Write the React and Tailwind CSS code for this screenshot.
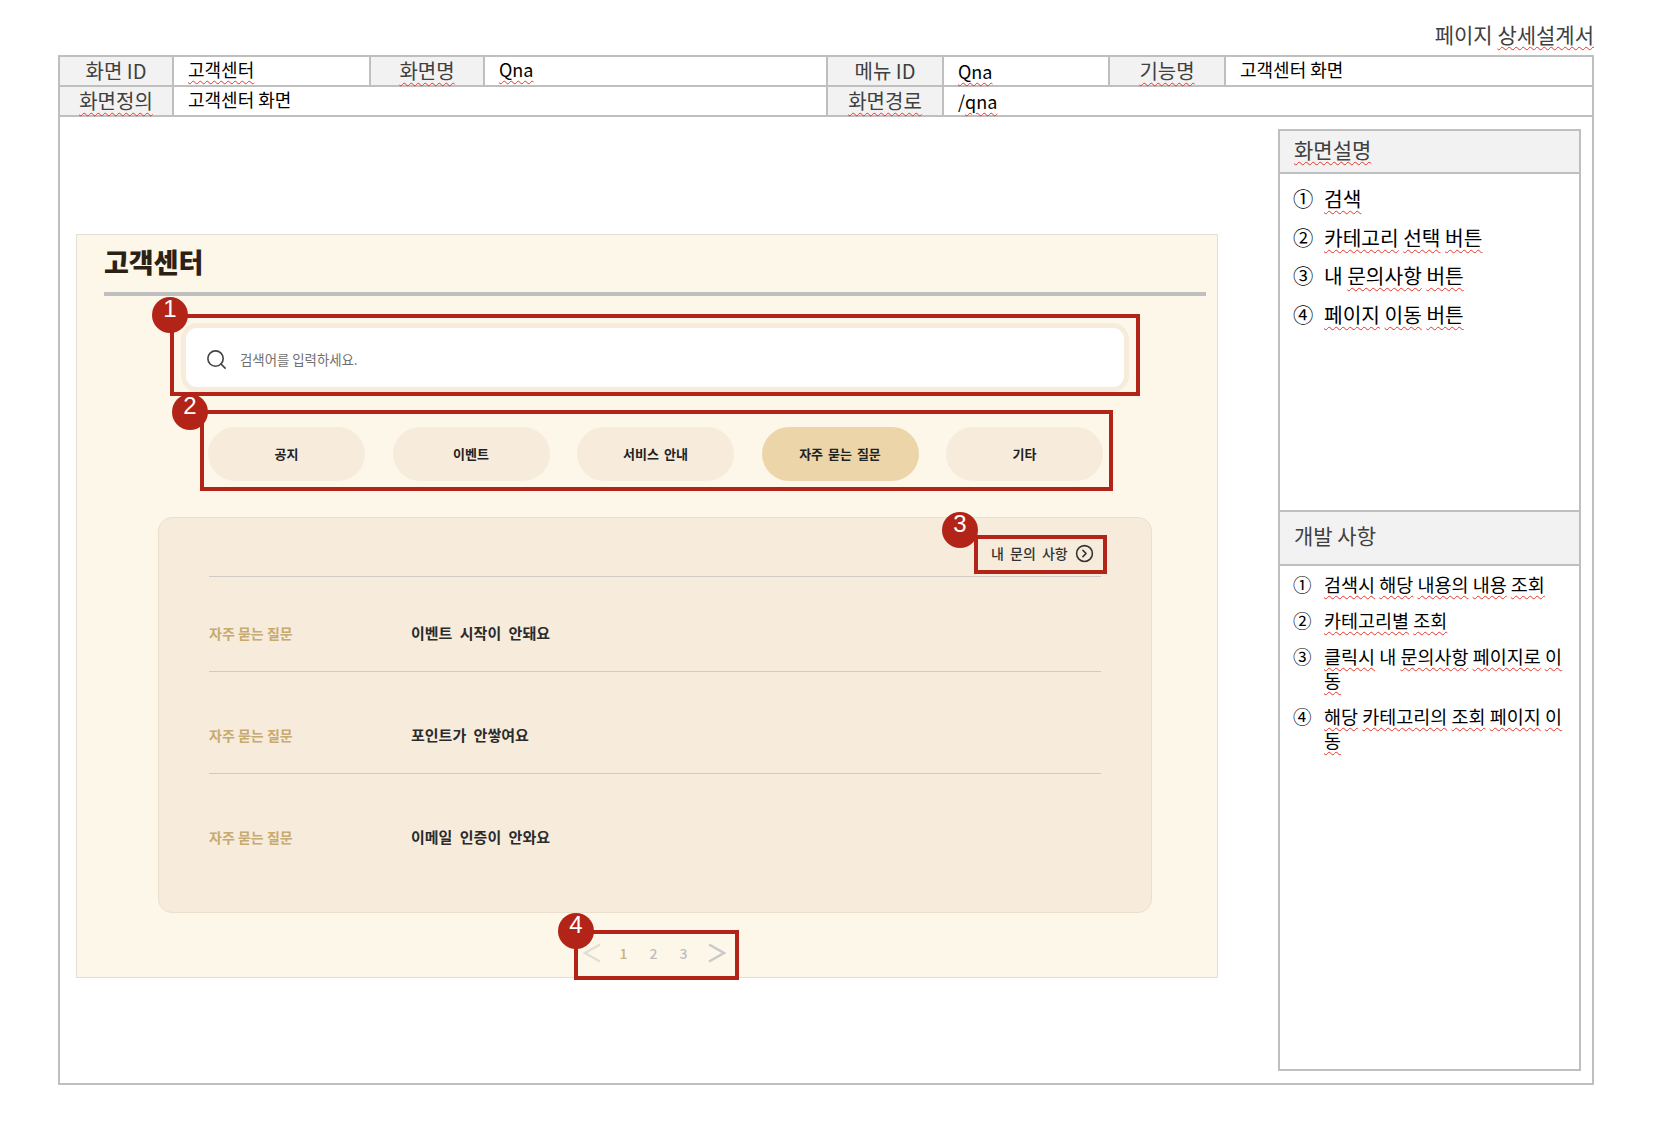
import { Search, CircleChevronRight } from 'lucide-react';

const KR = "font-['Noto_Sans_CJK_KR','Liberation_Sans',sans-serif]";

const Spell = ({ children }) => (
  <span className="underline decoration-wavy decoration-[#e8352b] decoration-1 underline-offset-[3px]">
    {children}
  </span>
);

const LabelCell = ({ children }) => (
  <div className="flex items-center justify-center bg-[#f2f2f2] border-r-2 border-[#bfbfbf] text-[20px] leading-none text-[#404040]">
    {children}
  </div>
);

const ValueCell = ({ children, className = 'border-r-2 border-[#bfbfbf]' }) => (
  <div className={`flex items-center pl-[14px] text-[18px] leading-none text-black ${className}`}>
    {children}
  </div>
);

const Badge = ({ n, className }) => (
  <div
    className={`absolute z-10 size-[36px] rounded-full bg-[#b22417] text-white text-[24px] leading-none flex justify-center font-['Liberation_Sans',sans-serif] ${className}`}
  >
    {n}
  </div>
);

const categories = ['공지', '이벤트', '서비스 안내', '자주 묻는 질문', '기타'];

const questions = [
  { title: '이벤트 시작이 안돼요', className: 'pt-[18px] border-b border-[#cfcac6]' },
  { title: '포인트가 안쌓여요', className: 'pt-[25px] border-b border-[#cfcac6]' },
  { title: '이메일 인증이 안와요', className: 'pt-[25px]' },
];

const ListRow = ({ num, children, className = '' }) => (
  <div className={`flex ${className}`}>
    <span className="w-[31px] shrink-0">{num}</span>
    <div>{children}</div>
  </div>
);

const App = () => {
  return (
    <div className={`w-[1654px] h-[1142px] bg-white pl-[58px] ${KR}`}>
      <div className="w-[1536px] h-[55px] flex justify-end items-end pb-[6px] text-[21px] leading-[30px] text-[#404040]">
        <span>
          페이지 <Spell>상세설계서</Spell>
        </span>
      </div>

      <div className="w-[1536px] h-[1030px] border-2 border-[#bfbfbf] flex flex-col">
        {/* 상단 정보 테이블 */}
        <div className="grid grid-cols-[114px_197px_114px_343px_116px_166px_116px_1fr] h-[30px] shrink-0 border-b-2 border-[#bfbfbf]">
          <LabelCell>화면 ID</LabelCell>
          <ValueCell className="pb-[4px] border-r-2 border-[#bfbfbf]"><Spell>고객센터</Spell></ValueCell>
          <LabelCell><Spell>화면명</Spell></LabelCell>
          <ValueCell className="pb-[4px] border-r-2 border-[#bfbfbf]"><Spell>Qna</Spell></ValueCell>
          <LabelCell>메뉴 ID</LabelCell>
          <ValueCell><Spell>Qna</Spell></ValueCell>
          <LabelCell><Spell>기능명</Spell></LabelCell>
          <ValueCell className="pb-[4px]">고객센터 화면</ValueCell>
        </div>
        <div className="grid grid-cols-[114px_654px_116px_1fr] h-[30px] shrink-0 border-b-2 border-[#bfbfbf]">
          <LabelCell><Spell>화면정의</Spell></LabelCell>
          <ValueCell className="pb-[4px] border-r-2 border-[#bfbfbf]">고객센터 화면</ValueCell>
          <LabelCell><Spell>화면경로</Spell></LabelCell>
          <ValueCell className="">
            /<Spell>qna</Spell>
          </ValueCell>
        </div>

        <div className="flex justify-between pl-[16px] pr-[11px]">
          {/* 화면 캡처 영역 */}
          <div className="mt-[117px] w-[1142px] h-[744px] bg-[#fdf7ea] border border-[#e5dfd3]">
            <h1 className="pl-[27px] pt-[5px] h-[57px] text-[27px] leading-[44px] font-black text-[#2b2115]">
              고객센터
            </h1>
            <div className="ml-[27px] mr-[11px] h-[4px] bg-[#bfbfbf]" />

            <div className="relative mt-[18px] ml-[93px] w-[970px] h-[82px] border-4 border-[#b22417] pt-[5px] px-[7px]">
              <Badge n="1" className="-left-[22px] -top-[21px]" />
              <div className="h-[69px] bg-white border-[5px] border-[#f7ecdc] rounded-2xl flex items-center pl-[19px] pt-[4px] gap-[12px]">
                <Search size={23} strokeWidth={1.7} className="text-[#444]" />
                <span className="text-[13.4px] text-[#6f6f6f]">검색어를 입력하세요.</span>
              </div>
            </div>

            <div className="relative mt-[14px] ml-[123px] w-[913px] h-[81px] border-4 border-[#b22417] pt-[13px] pl-[4px] flex gap-[27.5px]">
              <Badge n="2" className="-left-[32px] -top-[20px]" />
              {categories.map((label, i) => (
                <div
                  key={label}
                  className={`w-[157px] h-[54px] pb-[1px] rounded-full flex items-center justify-center text-[13px] [word-spacing:2px] font-bold text-[#222] ${i === 3 ? 'bg-[#ecd5a8]' : 'bg-[#f7ecdc]'}`}
                >
                  {label}
                </div>
              ))}
            </div>

            <div className="mt-[26px] ml-[81px] w-[994px] h-[396px] bg-[#f7ecdc] border border-[#ebe0cd] rounded-[14px] px-[50px]">
              <div className="flex justify-end -mr-[6px] pt-[17px]">
                <div className="relative w-[133px] h-[39px] border-4 border-[#b22417] flex items-center pl-[13px] pb-[3px] gap-[7px] text-[14px] [word-spacing:3px] font-medium text-[#333]">
                  <Badge n="3" className="-left-[36px] -top-[27px]" />
                  <span>내 문의 사항</span>
                  <CircleChevronRight size={19} strokeWidth={2} className="text-[#333]" />
                </div>
              </div>
              <div className="mt-[2px] border-t border-[#cfcac6]">
                {questions.map((q) => (
                  <div key={q.title} className={`flex ${q.className}`}>
                    <div className="h-[76px] flex items-center">
                      <span className="w-[202px] text-[14px] font-bold text-[#c6aa70]">
                        자주 묻는 질문
                      </span>
                      <span className="text-[15px] [word-spacing:4px] font-bold text-[#2b2b2b]">{q.title}</span>
                    </div>
                  </div>
                ))}
              </div>
            </div>

            <div className="relative mt-[17px] ml-[497px] w-[165px] h-[50px] border-4 border-[#b22417] flex items-center justify-between pl-[4px] pr-[8px] pb-[4px] text-[14px] font-medium">
              <Badge n="4" className="-left-[20px] -top-[21px]" />
              <svg width="19" height="20" viewBox="0 0 19 20" fill="none" stroke="#e2ded6" strokeWidth="2.5">
                <path d="M18 1.5 3 10l15 8.5" />
              </svg>
              <div className="flex gap-[22px] -ml-[2px]">
                <span className="text-[#c9b183]">1</span>
                <span className="text-[#bdbdbd]">2</span>
                <span className="text-[#bdbdbd]">3</span>
              </div>
              <svg width="19" height="20" viewBox="0 0 19 20" fill="none" stroke="#c9c9c9" strokeWidth="2.5">
                <path d="M1 1.5 16 10 1 18.5" />
              </svg>
            </div>
          </div>

          {/* 화면설명 / 개발 사항 */}
          <div className="mt-[12px] w-[303px] h-[942px] border-2 border-[#bfbfbf] flex flex-col">
            <div className="h-[43px] shrink-0 bg-[#f2f2f2] border-b-2 border-[#bfbfbf] flex items-center pl-[14px] pb-[3px] text-[21px] text-[#404040]">
              <Spell>화면설명</Spell>
            </div>
            <div className="h-[336px] shrink-0 pl-[13px] pt-[5px] text-[20.3px] leading-[38.6px] text-black">
              <ListRow num="①"><Spell>검색</Spell></ListRow>
              <ListRow num="②"><Spell>카테고리</Spell> <Spell>선택</Spell> <Spell>버튼</Spell></ListRow>
              <ListRow num="③">내 <Spell>문의사항</Spell> <Spell>버튼</Spell></ListRow>
              <ListRow num="④"><Spell>페이지</Spell> <Spell>이동</Spell> <Spell>버튼</Spell></ListRow>
            </div>
            <div className="h-[56px] shrink-0 bg-[#f2f2f2] border-y-2 border-[#bfbfbf] flex items-center pl-[14px] pb-[5px] text-[21px] text-[#404040]">
              개발 사항
            </div>
            <div className="pl-[13px] pt-[6px] text-[18.5px] leading-[24px] text-black">
              <ListRow num="①" className="mb-[12px]">
                <Spell>검색시</Spell> <Spell>해당</Spell> <Spell>내용의</Spell> <Spell>내용</Spell> <Spell>조회</Spell>
              </ListRow>
              <ListRow num="②" className="mb-[12px]">
                <Spell>카테고리별</Spell> <Spell>조회</Spell>
              </ListRow>
              <ListRow num="③" className="mb-[12px]">
                <Spell>클릭시</Spell> 내 <Spell>문의사항</Spell> <Spell>페이지로</Spell> <Spell>이</Spell>
                <br />
                <Spell>동</Spell>
              </ListRow>
              <ListRow num="④">
                <Spell>해당</Spell> <Spell>카테고리의</Spell> <Spell>조회</Spell> <Spell>페이지</Spell> <Spell>이</Spell>
                <br />
                <Spell>동</Spell>
              </ListRow>
            </div>
          </div>
        </div>
      </div>
    </div>
  );
};

export default App;
